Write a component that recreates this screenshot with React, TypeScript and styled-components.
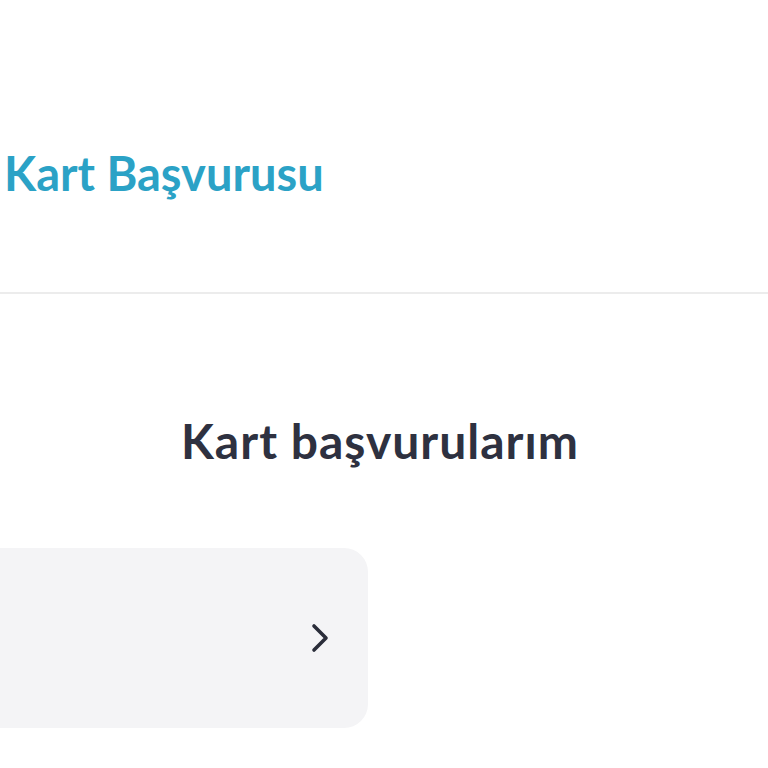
import React from "react";
import styled, { createGlobalStyle } from "styled-components";

const Global = createGlobalStyle`
  html, body { margin: 0; padding: 0; background: #ffffff; }
  body { font-family: "Lato", "Noto Sans", sans-serif; overflow: hidden; }
`;

const Page = styled.div`
  width: 768px;
  height: 768px;
  display: flex;
  flex-direction: column;
  overflow: hidden;
`;

const Header = styled.header`
  height: 294px;
  display: flex;
  align-items: flex-start;
  padding: 150px 0 0 4px;
  border-bottom: 2px solid #ececec;
  box-sizing: border-box;
`;

const Title = styled.h1`
  margin: 0;
  font-size: 47px;
  font-weight: 700;
  line-height: 1;
  color: #2ba2c6;
  letter-spacing: 0px;
`;

const Content = styled.main`
  display: flex;
  flex-direction: column;
`;

const Heading = styled.h2`
  margin: 123px 0 0 0;
  text-align: center;
  font-size: 48px;
  font-weight: 700;
  color: #2e3140;
  letter-spacing: 1px;
  padding-right: 8px;
  line-height: 1;
`;

const Card = styled.div`
  margin: 83px 0 0 -24px;
  width: 392px;
  height: 180px;
  background: #f4f4f6;
  border-radius: 24px;
  display: flex;
  align-items: center;
  justify-content: flex-end;
  padding-right: 38px;
  box-sizing: border-box;
`;

const Chevron = () => (
  <svg width="20" height="30" viewBox="0 0 20 30" fill="none">
    <path d="M4 3 L16 15 L4 27" stroke="#2a2d3a" strokeWidth="3.6" strokeLinecap="round" strokeLinejoin="round" />
  </svg>
);

export default function App() {
  return (
    <>
      <Global />
      <Page>
        <Header>
          <Title>Kart Başvurusu</Title>
        </Header>
        <Content>
          <Heading>Kart başvurularım</Heading>
          <Card>
            <Chevron />
          </Card>
        </Content>
      </Page>
    </>
  );
}
